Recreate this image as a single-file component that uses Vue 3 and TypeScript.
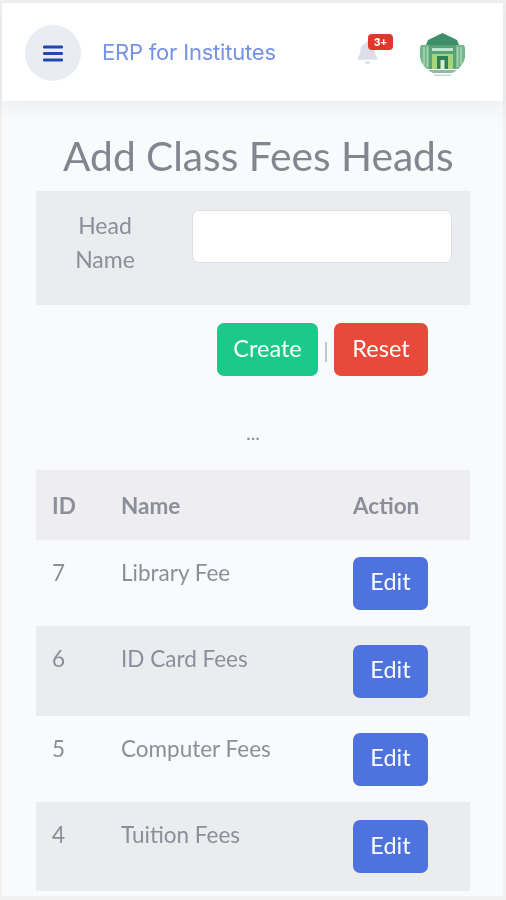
<script setup lang="ts">
import { ref } from 'vue';

const headName = ref('');

// row heights differ a little in the reference
const fee_rows = ref([
  { id: 7, name: 'Library Fee', height: 86 },
  { id: 6, name: 'ID Card Fees', height: 90 },
  { id: 5, name: 'Computer Fees', height: 86 },
  { id: 4, name: 'Tuition Fees', height: 89 },
]);
</script>

<template>
  <div class="frame">
    <header class="topbar">
      <button class="menu-btn" aria-label="Menu">
        <svg width="20" height="17" viewBox="0 0 20 17">
          <rect x="0" y="0.5" width="20" height="3" rx="1.2" fill="#2447ad" />
          <rect x="0" y="7" width="20" height="3" rx="1.2" fill="#2447ad" />
          <rect x="0" y="13.5" width="20" height="3" rx="1.2" fill="#2447ad" />
        </svg>
      </button>
      <span class="brand">ERP for Institutes</span>
      <div class="topbar-right">
        <div class="bell">
          <svg width="21" height="23" viewBox="0 0 448 512">
            <path fill="#dcdee9" d="M224 512c35.300 0 64-28.700 64-64H160c0 35.300 28.700 64 64 64zm215.400-149.700c-19.300-20.800-55.500-52-55.500-154.300 0-77.700-54.500-139.900-128-155.200V32c0-17.700-14.300-32-32-32s-32 14.300-32 32v20.800C118.400 68.100 64 130.300 64 208c0 102.300-36.200 133.500-55.500 154.300-6 6.400-8.600 14.100-8.500 21.700.1 16.400 13 32 32.100 32h383.800c19.100 0 32-15.600 32.100-32 .1-7.600-2.500-15.300-8.500-21.700z" />
          </svg>
          <span class="badge">3+</span>
        </div>
        <svg class="logo" width="45" height="44" viewBox="0 0 45 44">
          <path d="M1 12 h10 v24 h-4 a21 21 0 0 1 -6 -24z" fill="#74b88a" />
          <path d="M44 12 h-10 v24 h4 a21 21 0 0 0 6 -24z" fill="#74b88a" />
          <path d="M4 14 v18 M7.500 14 v20 M41 14 v18 M37.500 14 v20" stroke="#a9d6b4" stroke-width="1.500" />
          <path d="M22.500 0 L37 7 L39 12 H6 L8 7z" fill="#3d8f68" />
          <rect x="9" y="12" width="27" height="24" fill="#58a377" />
          <rect x="12" y="15" width="21" height="3" fill="#c5e4cd" />
          <rect x="12" y="21" width="21" height="15" fill="#a6d57a" />
          <rect x="17" y="23" width="11" height="13" fill="#2f7f58" />
          <rect x="20.500" y="27" width="4" height="9" fill="#d9efc5" />
          <path d="M8 37 h29 a21 21 0 0 1 -5 3 h-19 a21 21 0 0 1 -5 -3z" fill="#8fb9a5" />
          <rect x="14" y="41.500" width="17" height="1.500" fill="#c3d9ce" />
        </svg>
      </div>
    </header>

    <main class="content">
      <h1 class="title">Add Class Fees Heads</h1>

      <form class="head-form" @submit.prevent>
        <label class="head-label" for="head-name">Head Name</label>
        <input id="head-name" v-model="headName" class="head-input" type="text" />
      </form>

      <div class="form-actions">
        <button class="btn btn-create">Create</button>
        <span class="divider">|</span>
        <button class="btn btn-reset">Reset</button>
      </div>

      <p class="dots">...</p>

      <table class="fees-table">
        <thead>
          <tr>
            <th class="col-id">ID</th>
            <th class="col-name">Name</th>
            <th class="col-action">Action</th>
          </tr>
        </thead>
        <tbody>
          <tr v-for="row in fee_rows" :key="row.id" :style="{ height: row.height + 'px' }">
            <td class="col-id">{{ row.id }}</td>
            <td class="col-name">{{ row.name }}</td>
            <td class="col-action">
              <button class="btn btn-edit">Edit</button>
            </td>
          </tr>
        </tbody>
      </table>
    </main>
  </div>
</template>

<style>
html,
body {
  margin: 0;
  background: #f0f0f1;
}
</style>

<style scoped>
.frame {
  box-sizing: border-box;
  width: 506px;
  height: 900px;
  padding: 3px 3px 4px 2px;
  overflow: hidden;
  background: #f0f0f1;
  font-family: Lato, "Open Sans", sans-serif;
  color: #8c8e9a;
  filter: blur(0.6px);
}

.topbar {
  display: flex;
  align-items: center;
  height: 98px;
  padding: 0 38px 0 23px;
  box-sizing: border-box;
  background: #fff;
  box-shadow: 0 6px 18px rgba(58, 59, 69, 0.08);
  position: relative;
}

.menu-btn {
  display: flex;
  align-items: center;
  justify-content: center;
  width: 56px;
  height: 56px;
  margin-top: 2px;
  padding: 0;
  border: none;
  border-radius: 50%;
  background: #eaecf4;
}

.brand {
  margin-left: 21px;
  font-family: Inter, Lato, sans-serif;
  font-size: 22px;
  letter-spacing: -0.2px;
  color: #7592e4;
}

.topbar-right {
  display: flex;
  align-items: center;
  margin-left: auto;
  gap: 42px;
  margin-top: 6px;
}

.bell {
  position: relative;
  display: flex;
  margin-top: -5px;
}

.badge {
  position: absolute;
  top: -7px;
  left: 11px;
  width: 25px;
  height: 16px;
  border-radius: 4px;
  background: #e0362c;
  color: #fff;
  font-size: 11px;
  font-weight: 800;
  line-height: 16px;
  text-align: center;
}

.content {
  height: 795px;
  padding: 0 33px 0 34px;
  box-sizing: border-box;
  background: #f9fafc;
}

.title {
  margin: 0;
  padding: 32px 0 12px 27px;
  font-size: 40.700px;
  font-weight: 400;
  line-height: 46px;
  color: #83858f;
  white-space: nowrap;
}

.head-form {
  display: flex;
  align-items: flex-start;
  height: 114px;
  padding: 19px 18px 0 0;
  box-sizing: border-box;
  background: #ebecee;
}

.head-label {
  width: 66px;
  margin: -2px 0 0 36px;
  font-size: 23px;
  line-height: 34px;
  text-align: center;
}

.head-input {
  box-sizing: border-box;
  width: 260px;
  height: 53px;
  margin-left: auto;
  border: 1px solid #dcdee6;
  border-radius: 7px;
  background: #fff;
}

.form-actions {
  display: flex;
  align-items: center;
  justify-content: flex-end;
  margin-top: 18px;
  padding-right: 42px;
}

.divider {
  width: 16px;
  font-size: 22px;
  text-align: center;
  color: #b4b6c2;
}

.btn {
  height: 53px;
  padding: 0 0 4px;
  border: none;
  border-radius: 7px;
  font-family: inherit;
  font-size: 23.500px;
  color: #fff;
}

.btn-create {
  width: 101px;
  background: #1cc88a;
}

.btn-reset {
  width: 94px;
  background: #e74a3b;
}

.btn-edit {
  width: 75px;
  background: #4e73df;
}

.dots {
  margin: 38px 0 0;
  height: 56px;
  font-size: 20px;
  line-height: 36px;
  text-align: center;
}

.fees-table {
  width: 434px;
  border-collapse: collapse;
  table-layout: fixed;
  font-size: 22.500px;
}

.fees-table th {
  height: 70px;
  padding: 0 0 0 16px;
  box-sizing: border-box;
  font-weight: 700;
  text-align: left;
  background: #eeeef0;
}

.fees-table td {
  padding: 19px 0 0 16px;
  vertical-align: top;
}

.fees-table td.col-action {
  padding-top: 0;
  vertical-align: middle;
}

.fees-table .col-id {
  width: 69px;
}

.fees-table .col-action {
  width: 133px;
}

.fees-table tbody tr:nth-child(even) {
  background: #ebecee;
}
</style>
